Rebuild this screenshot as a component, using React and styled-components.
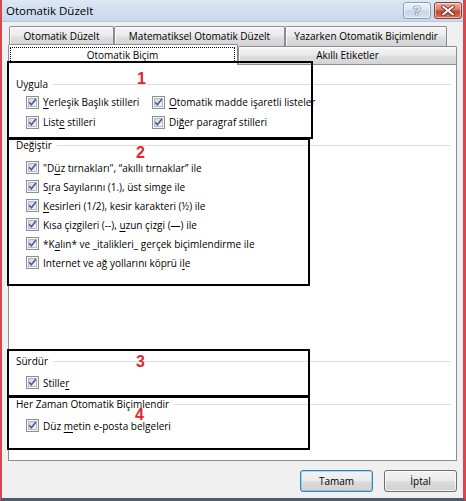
import styled, { createGlobalStyle } from 'styled-components';

const GlobalStyle = createGlobalStyle`
  html, body {
    margin: 0;
    padding: 0;
    background: #ffffff;
  }

  body {
    color: #000000;
    font-family: 'Open Sans', 'Noto Sans', sans-serif;
    font-size: 10px;
  }
`;

const Window = styled.div`
  background: #f0f0f0;
  border-bottom: 3px solid #4c5a6e;
  border-left: 2px solid #d9464f;
  border-right: 3px solid #d9464f;
  box-sizing: border-box;
  display: flex;
  flex-direction: column;
  height: 501px;
  position: relative;
  width: 466px;
`;

const TitleBar = styled.header`
  align-items: center;
  background: linear-gradient(#dde8f4 0%, #d2e0f0 45%, #c8d9ec 100%);
  border-bottom: 1px solid #b8c8dc;
  box-sizing: border-box;
  display: flex;
  height: 22px;
  padding: 0 1px 0 4px;
`;

const Title = styled.h1`
  flex: 1;
  font-size: 11.5px;
  font-weight: 400;
  margin: 0;
`;

const CaptionButton = styled.button`
  align-items: center;
  background: ${(p) =>
    p.$close
      ? 'linear-gradient(#eab3a6 0%, #d97a65 45%, #c5442c 55%, #d8745a 100%)'
      : 'linear-gradient(#eef3f9 0%, #dbe5f1 45%, #c7d5e7 55%, #d7e2ef 100%)'};
  border: 1px solid ${(p) => (p.$close ? '#8e3b2c' : '#8c9db5')};
  border-radius: 3px;
  box-shadow: inset 0 0 0 1px rgba(255, 255, 255, 0.55);
  display: flex;
  height: 17px;
  justify-content: center;
  margin-left: ${(p) => (p.$close ? '3px' : '0')};
  padding: 0;
  width: 28px;
`;

const HelpMark = styled.span`
  color: #f4f7fb;
  font-family: 'Liberation Sans', sans-serif;
  font-size: 13px;
  font-weight: 700;
  line-height: 1;
  text-shadow: 0 0 1px #4d5f7c, 0 0 1px #4d5f7c, 0 0 1px #4d5f7c;
`;

const Client = styled.div`
  display: flex;
  flex: 1;
  flex-direction: column;
  padding: 4px 6px 0;
`;

const TabRow = styled.div`
  align-items: flex-end;
  display: flex;
  height: ${(p) => p.$height}px;
  padding-left: ${(p) => p.$indent}px;
  position: relative;
  z-index: ${(p) => p.$layer};
`;

const Tab = styled.div`
  align-items: center;
  background: ${(p) =>
    p.$active ? '#ffffff' : 'linear-gradient(#f4f4f4 0%, #ebebeb 45%, #dedede 55%, #d3d3d3 100%)'};
  border: 1px solid #898c95;
  border-bottom: none;
  border-radius: 2px 2px 0 0;
  box-shadow: ${(p) => (p.$active ? 'none' : 'inset 1px 1px 0 rgba(255, 255, 255, 0.8)')};
  box-sizing: border-box;
  display: flex;
  height: ${(p) => (p.$active ? 21 : p.$tall ? 20 : 18)}px;
  justify-content: center;
  margin-bottom: ${(p) => (p.$active ? -1 : 0)}px;
  padding: ${(p) => (p.$active ? '2px 2px 2px 1px' : '0 0 2px')};
  position: relative;
  width: ${(p) => p.$width}px;
  z-index: ${(p) => (p.$active ? 2 : 0)};
`;

const FocusRing = styled.span`
  align-items: center;
  align-self: stretch;
  border: 1px dotted #000000;
  display: flex;
  flex: 1;
  justify-content: center;
`;

const Panel = styled.section`
  background: #ffffff;
  border: 1px solid #898c95;
  box-sizing: border-box;
  display: flex;
  flex-direction: column;
  height: 397px;
  padding: 12px 5px 0 7px;
  position: relative;
  z-index: 1;
`;

const Group = styled.div`
  display: flex;
  flex-direction: column;
  margin-top: ${(p) => p.$top || 0}px;
`;

const GroupHead = styled.div`
  align-items: center;
  display: flex;
  gap: 5px;
  height: 14px;
`;

const Rule = styled.span`
  background: #d8e0e6;
  flex: 1;
  height: 1px;
`;

const Options = styled.div`
  display: grid;
  grid-auto-rows: ${(p) => p.$row}px;
  grid-template-columns: ${(p) => p.$columns || '1fr'};
  margin-top: ${(p) => p.$gap}px;
  padding-left: 10px;
`;

const Option = styled.label`
  align-items: center;
  display: flex;
  gap: 4px;
  white-space: nowrap;
`;

const Key = styled.span`
  text-decoration: underline;
  text-underline-offset: 2px;
`;

const Footer = styled.footer`
  display: flex;
  gap: 11px;
  justify-content: flex-end;
  padding: 9px 0 6px;
`;

const Button = styled.button`
  background: linear-gradient(#f3f3f3 0%, #ebebeb 48%, #dddddd 52%, #d0d0d0 100%);
  border: 1px solid ${(p) => (p.$primary ? '#3c7fb1' : '#707070')};
  border-radius: 3px;
  box-shadow: inset 0 0 0 1px ${(p) => (p.$primary ? 'rgba(72, 191, 237, 0.45)' : 'rgba(255, 255, 255, 0.7)')};
  color: #000000;
  font-family: inherit;
  font-size: 10px;
  height: 22px;
  padding: 0;
  width: 73px;
`;

/* markup drawn on top of the dialog */
const Marker = styled.div`
  border: 2px solid #000000;
  box-sizing: border-box;
  height: ${(p) => p.$h}px;
  left: ${(p) => p.$x}px;
  pointer-events: none;
  position: absolute;
  top: ${(p) => p.$y}px;
  width: ${(p) => p.$w}px;
  z-index: 5;
`;

const Badge = styled.span`
  color: #e3262c;
  font-family: 'Liberation Sans', sans-serif;
  font-size: 16px;
  font-weight: 700;
  left: ${(p) => p.$x}px;
  line-height: 1;
  position: absolute;
  top: ${(p) => p.$y}px;
  z-index: 6;
`;

const CheckBox = () => (
  <svg width='13' height='13' viewBox='0 0 13 13'>
    <defs>
      <linearGradient id='boxFill' x1='0' y1='0' x2='1' y2='1'>
        <stop offset='0' stopColor='#cdd3dd' />
        <stop offset='1' stopColor='#f8f9fb' />
      </linearGradient>
    </defs>
    <rect x='0.5' y='0.5' width='12' height='12' fill='#f6f6f6' stroke='#8e8f8f' />
    <rect x='2.5' y='2.5' width='8' height='8' fill='url(#boxFill)' stroke='#b6bbc3' />
    <path d='M3.2 6.3 L5.4 8.8 L9.9 3' fill='none' stroke='#4a5d98' strokeWidth='1.6' />
  </svg>
);

const Check = ({ children }) => (
  <Option>
    <CheckBox />
    <span>{children}</span>
  </Option>
);

const Section = ({ title, top, gap, row, columns, children }) => (
  <Group $top={top}>
    <GroupHead>
      <span>{title}</span>
      <Rule />
    </GroupHead>
    <Options $gap={gap} $row={row} $columns={columns}>
      {children}
    </Options>
  </Group>
);

const App = () => {
  return (
    <>
      <GlobalStyle />
      <Window>
        <TitleBar>
          <Title>Otomatik Düzelt</Title>
          <CaptionButton>
            <HelpMark>?</HelpMark>
          </CaptionButton>
          <CaptionButton $close>
            <svg width='14' height='11' viewBox='0 0 14 11'>
              <path
                d='M2 1.5 L12 9.5 M12 1.5 L2 9.5'
                stroke='#6b2a20'
                strokeWidth='3.6'
                strokeLinecap='round'
              />
              <path
                d='M2 1.5 L12 9.5 M12 1.5 L2 9.5'
                stroke='#ffffff'
                strokeWidth='2'
                strokeLinecap='round'
              />
            </svg>
          </CaptionButton>
        </TitleBar>

        <Client>
          <TabRow $height={20} $indent={1} $layer={0}>
            <Tab $width={105} $tall>Otomatik Düzelt</Tab>
            <Tab $width={171} $tall>Matematiksel Otomatik Düzelt</Tab>
            <Tab $width={162} $tall>Yazarken Otomatik Biçimlendir</Tab>
          </TabRow>
          <TabRow $height={18} $indent={0} $layer={2}>
            <Tab $width={230} $active>
              <FocusRing>Otomatik Biçim</FocusRing>
            </Tab>
            <Tab $width={219}>Akıllı Etiketler</Tab>
          </TabRow>

          <Panel>
            <Section title='Uygula' gap={1} row={20} columns='126px auto'>
              <Check>
                <Key>Y</Key>erleşik Başlık stilleri
              </Check>
              <Check>
                <Key>O</Key>tomatik madde işaretli listeler
              </Check>
              <Check>
                List<Key>e</Key> stilleri
              </Check>
              <Check>
                Di<Key>ğ</Key>er paragraf stilleri
              </Check>
            </Section>

            <Section title='Değiştir' top={6} gap={6} row={19}>
              <Check>
                "D<Key>ü</Key>z tırnakları", “akıllı tırnaklar” ile
              </Check>
              <Check>
                S<Key>ı</Key>ra Sayılarını (1.), üst simge ile
              </Check>
              <Check>
                <Key>K</Key>esirleri (1/2), kesir karakteri (½) ile
              </Check>
              <Check>
                Kısa çizgileri (--), <Key>u</Key>zun çizgi (—) ile
              </Check>
              <Check>
                *K<Key>a</Key>lın* ve _italikleri_ gerçek biçimlendirme ile
              </Check>
              <Check>
                Internet ve ağ yollarını köprü i<Key>l</Key>e
              </Check>
            </Section>

            <Section title='Sürdür' top={82} gap={5} row={19}>
              <Check>
                Stille<Key>r</Key>
              </Check>
            </Section>

            <Section title='Her Zaman Otomatik Biçimlendir' top={5} gap={5} row={19}>
              <Check>
                Düz <Key>m</Key>etin e-posta belgeleri
              </Check>
            </Section>
          </Panel>

          <Footer>
            <Button $primary>Tamam</Button>
            <Button>İptal</Button>
          </Footer>
        </Client>

        <Marker $x={5} $y={61} $w={306} $h={78} />
        <Marker $x={5} $y={138} $w={303} $h={148} />
        <Marker $x={5} $y={349} $w={303} $h={48} />
        <Marker $x={5} $y={396} $w={303} $h={54} />
        <Badge $x={135} $y={71}>1</Badge>
        <Badge $x={134} $y={145}>2</Badge>
        <Badge $x={134} $y={354}>3</Badge>
        <Badge $x={133} $y={407}>4</Badge>
      </Window>
    </>
  );
};

export default App;
